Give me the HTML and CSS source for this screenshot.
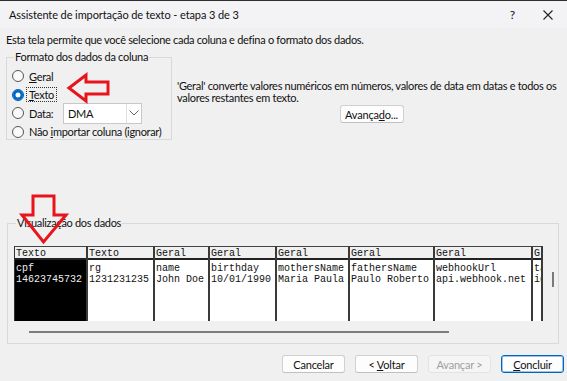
FILE: index.html
```html
<!DOCTYPE html>
<html lang="pt-BR">
<head>
    <meta charset="UTF-8">
    <title>Assistente de importação de texto</title>
    <link rel="stylesheet" href="styles.css">
</head>
<body>
    <div class="window">
        <div class="titlebar">
            <span class="title">Assistente de importação de texto - etapa 3 de 3</span>
            <span class="help">?</span>
            <svg class="close" width="10" height="10" viewBox="0 0 10 10">
                <path d="M0.5 0.5 L9.5 9.5 M9.5 0.5 L0.5 9.5" stroke="#222" stroke-width="1.1" fill="none"/>
            </svg>
        </div>

        <div class="content">
            <p class="intro">Esta tela permite que você selecione cada coluna e defina o formato dos dados.</p>

            <div class="top">
                <fieldset class="group format">
                    <legend>Formato dos dados da coluna</legend>
                    <div class="opt"><span class="radio"></span><span><u>G</u>eral</span></div>
                    <div class="opt"><span class="radio on"></span><span class="focus"><u>T</u>exto</span></div>
                    <div class="opt">
                        <span class="radio"></span><span class="data-label">Data:</span>
                        <span class="select">
                            <span class="select-value">DMA</span>
                            <span class="select-btn">
                                <svg width="10" height="6" viewBox="0 0 10 6"><path d="M0.5 0.5 L5 5 L9.5 0.5" stroke="#666" fill="none"/></svg>
                            </span>
                        </span>
                    </div>
                    <div class="opt"><span class="radio"></span><span>Não <u>i</u>mportar coluna (ignorar)</span></div>
                </fieldset>

                <div class="info">
                    <p>'Geral' converte valores numéricos em números, valores de data em datas e todos os valores restantes em texto.</p>
                    <button class="btn">Avança<u>d</u>o...</button>
                </div>
            </div>

            <fieldset class="group preview">
                <legend>Visualização dos dados</legend>
                <div class="preview-row">
                    <div class="grid">
                        <div class="col c1 selected"><div class="hd">Texto</div><div class="cells">cpf<br>14623745732</div></div>
                        <div class="col c2"><div class="hd">Texto</div><div class="cells">rg<br>1231231235</div></div>
                        <div class="col c3"><div class="hd">Geral</div><div class="cells">name<br>John Doe</div></div>
                        <div class="col c4"><div class="hd">Geral</div><div class="cells">birthday<br>10/01/1990</div></div>
                        <div class="col c5"><div class="hd">Geral</div><div class="cells">mothersName<br>Maria Paula</div></div>
                        <div class="col c6"><div class="hd">Geral</div><div class="cells">fathersName<br>Paulo Roberto</div></div>
                        <div class="col c7"><div class="hd">Geral</div><div class="cells">webhookUrl<br>api.webhook.net</div></div>
                        <div class="col c8"><div class="hd">G</div><div class="cells">ta<br>id</div></div>
                    </div>
                    <div class="vthumb"></div>
                </div>
                <div class="hscroll"></div>
            </fieldset>

            <div class="actions">
                <button class="btn">Cancelar</button>
                <button class="btn">&lt; <u>V</u>oltar</button>
                <button class="btn" disabled>Avançar &gt;</button>
                <button class="btn default"><u>C</u>oncluir</button>
            </div>
        </div>

        <!-- setas de destaque -->
        <svg class="marks" width="567" height="381" viewBox="0 0 567 381">
            <polygon points="69,88 86,75 86,82 108,82 108,94 86,94 86,101" fill="none" stroke="#e8141c" stroke-width="3" stroke-linejoin="miter"/>
            <polygon points="33,196 54,196 54,215 66,215 43.5,242 22,215 33,215" fill="none" stroke="#e8141c" stroke-width="3" stroke-linejoin="miter"/>
        </svg>
    </div>
</body>
</html>
```

FILE: styles.css
```css
* {
    box-sizing: border-box;
}

body {
    margin: 0;
    background-color: #f0f0f0;
    font-family: Lato, 'Noto Sans', sans-serif;
    font-size: 11px;
    letter-spacing: -0.3px;
    color: #111;
}

.window {
    position: relative;
    width: 567px;
    height: 381px;
    overflow: hidden;
    background-color: #f0f0f0;
    border-top: 1px solid #2e2e2e;
}

/* barra de título */
.titlebar {
    display: flex;
    align-items: center;
    height: 27px;
    padding-left: 9px;
    background-color: #f3f3f5;
    font-size: 11px;
    letter-spacing: -0.1px;
}

.title {
    flex: 1;
}

.help {
    margin-right: 28px;
    font-size: 12px;
}

.close {
    margin-right: 14px;
}

.content {
    padding: 5px 7px 0 6px;
}

.intro {
    margin: 0;
    line-height: 14px;
}

.top {
    display: flex;
    margin-top: 3px;
}

/* caixas de grupo */
.group {
    margin: 0;
    border: 1px solid #d9d9d9;
    min-width: 0;
}

.group legend {
    padding: 0 1px;
    margin-left: 2px;
    line-height: 14px;
}

.format {
    width: 166px;
    height: 90px;
    padding: 3px 0 0 5px;
}

.opt {
    display: flex;
    align-items: center;
    height: 18.5px;
}

.radio {
    width: 12px;
    height: 12px;
    margin-right: 5px;
    border: 1px solid #555;
    border-radius: 50%;
    background-color: #fafafa;
    flex-shrink: 0;
}

.radio.on {
    border-color: #0067c0;
    background-color: #0067c0;
    box-shadow: inset 0 0 0 2.5px #0067c0, inset 0 0 0 6px #fff;
}

.focus {
    margin-left: -2px;
    padding: 0 2px;
    outline: 1px dotted #333;
}

.data-label {
    width: 34px;
}

.select {
    display: flex;
    align-items: center;
    width: 79px;
    height: 21px;
    border: 1px solid #c8c8c8;
    background-color: #fff;
}

.select-value {
    flex: 1;
    padding-left: 4px;
}

.select-btn {
    display: flex;
    align-items: center;
    justify-content: center;
    width: 15px;
    height: 100%;
    border-left: 1px solid #e0e0e0;
}

.info {
    flex: 1;
    display: flex;
    flex-direction: column;
    align-items: center;
    padding: 30px 0 0 5px;
}

.info p {
    margin: 0;
    line-height: 12px;
}

.btn {
    font-family: inherit;
    font-size: 11px;
    letter-spacing: -0.2px;
    color: #111;
    height: 19px;
    padding: 0;
    background-color: #fdfdfd;
    border: 1px solid #d0d0d0;
    border-bottom-color: #c0c0c0;
    border-radius: 3px;
}

.info .btn {
    width: 64px;
    height: 18px;
    margin: 1px 0 0 6px;
}

/* visualização */
.preview {
    width: 552px;
    height: 128px;
    margin-top: 76px;
    margin-left: 1px;
    padding: 16px 0 0 6px;
}

.preview-row {
    display: flex;
}

.grid {
    display: flex;
    border-left: 1px solid #333;
    font-family: 'Liberation Mono', monospace;
    font-size: 10px;
    line-height: 11px;
    letter-spacing: 0;
}

.col {
    border-right: 2px solid #3a3a3a;
}

.hd {
    height: 14px;
    padding: 1px 0 0 1px;
    overflow: hidden;
    background-color: #f0f0f0;
    border-top: 1px solid #444;
    border-bottom: 2px solid #222;
}

.cells {
    height: 61px;
    padding: 3px 0 0 1px;
    background-color: #fff;
    white-space: nowrap;
    overflow: hidden;
}

.selected .cells {
    background-color: #000;
    color: #eee;
}

.c1 { width: 73px; }
.c2 { width: 67px; }
.c3 { width: 55px; }
.c4 { width: 67px; }
.c5 { width: 73px; }
.c6 { width: 85px; }
.c7 { width: 98px; }
.c8 { width: 10px; }

.vthumb {
    width: 2px;
    height: 15px;
    margin: 26px 0 0 9px;
    background-color: #7a7a7a;
}

.hscroll {
    width: 420px;
    height: 2px;
    margin: 10px 0 0 15px;
    background-color: #7d7d7d;
}

/* botões */
.actions {
    display: flex;
    justify-content: flex-end;
    gap: 10px;
    margin-top: 11px;
    margin-right: -4px;
}

.actions .btn {
    width: 63px;
    height: 18px;
}

.btn:disabled {
    color: #a0a0a0;
    background-color: #f5f5f5;
    border-color: #e3e3e3;
}

.btn.default {
    border-color: #0067c0;
    box-shadow: inset 0 0 0 1px #9cc4ea;
}

.marks {
    position: absolute;
    top: -1px;
    left: 0;
    pointer-events: none;
}
```
